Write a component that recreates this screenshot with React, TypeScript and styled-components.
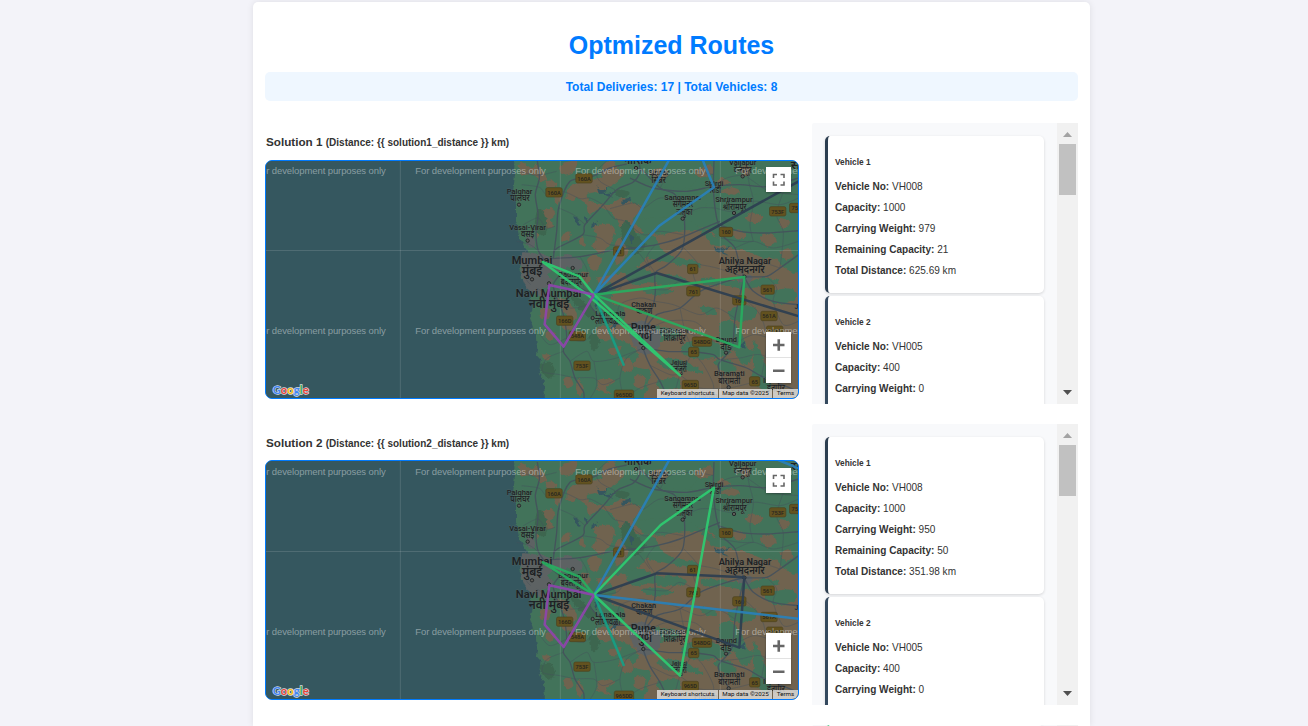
import React from "react";
import styled, { createGlobalStyle } from "styled-components";

const GlobalStyle = createGlobalStyle`
  * { box-sizing: border-box; }
  body {
    margin: 0;
    height: 726px;
    overflow: hidden;
    background: #f3f3f9;
    font-family: "Liberation Sans", Arial, sans-serif;
    font-size: 10px;
    color: #333;
  }
`;

const Page = styled.main`
  width: 837px;
  height: 724px;
  overflow: hidden;
  margin: 2px 0 0 253px;
  padding: 29px 12px 0;
  background: #fff;
  border-radius: 5px 5px 0 0;
  box-shadow: 0 0 7px rgba(0, 0, 0, 0.09);
`;

const Title = styled.h1`
  margin: 0;
  height: 41px;
  line-height: 29px;
  font-size: 25px;
  text-align: center;
  color: #007bff;
`;

const Summary = styled.div`
  height: 29px;
  margin-bottom: 22px;
  border-radius: 5px;
  background: #eff7ff;
  color: #007bff;
  font-size: 12px;
  font-weight: 700;
  line-height: 30px;
  text-align: center;
`;

const Solution = styled.section`
  display: flex;
  gap: 13px;
  height: 281px;
  margin-bottom: 20px;
`;

const MapColumn = styled.div`
  width: 534px;
`;

const Heading = styled.h3`
  margin: 0;
  height: 37px;
  padding: 12px 0 0 1px;
  font-size: 11.7px;
  line-height: 14px;
  white-space: pre;
  small { font-size: 10px; }
`;

const MapFrame = styled.div<{ $tall?: boolean }>`
  position: relative;
  height: ${(p) => (p.$tall ? 240 : 239)}px;
  margin-top: ${(p) => (p.$tall ? -1 : 0)}px;
  border: 1px solid #007bff;
  border-radius: 7px;
  overflow: hidden;
  background: #35575f;
  > svg { display: block; width: 532px; height: 100%; }
`;

const MapButtons = styled.div<{ $top: number }>`
  position: absolute;
  right: 7px;
  top: ${(p) => p.$top}px;
  width: 25px;
  background: #fff;
  box-shadow: 0 1px 2px rgba(0, 0, 0, 0.3);
  svg { display: block; width: 25px; height: 25px; }
  svg + svg { border-top: 1px solid #e2e2e2; height: 26px; }
`;

const Credits = styled.div`
  position: absolute;
  right: 0;
  bottom: 0;
  display: flex;
  gap: 1px;
  font: 400 6.2px/9px Roboto, sans-serif;
  color: #111;
`;

const Credit = styled.span<{ $w: number }>`
  width: ${(p) => p.$w}px;
  height: 9px;
  text-align: center;
  white-space: nowrap;
  background: rgba(235, 235, 232, 0.76);
`;

const Panel = styled.aside`
  display: flex;
  width: 266px;
  height: 281px;
  overflow: hidden;
  background: #f8f9fb;
  border-radius: 2px 0 0 0;
`;

const Cards = styled.div<{ $scrolled?: boolean }>`
  flex: 1;
  padding: ${(p) => (p.$scrolled ? 0 : 13)}px 13px 0;
`;

const Card = styled.article<{ $color: string }>`
  height: 157px;
  margin-bottom: 3px;
  padding: 20px 0 0 7px;
  border-left: 3px solid ${(p) => p.$color};
  border-radius: 5px;
  background: #fff;
  box-shadow: 0 1px 3px rgba(0, 0, 0, 0.15);
`;

const CardTitle = styled.h4`
  margin: 0 0 8px;
  font-size: 8.3px;
  line-height: 12px;
`;

const Field = styled.p`
  margin: 0;
  line-height: 21px;
  font-size: 10.05px;
`;

const Scrollbar = styled.div`
  display: flex;
  flex-direction: column;
  align-items: center;
  width: 21px;
  background: #f1f1f1;
  svg { width: 21px; height: 21px; }
`;

const Thumb = styled.div`
  width: 17px;
  height: 51px;
  margin-bottom: auto;
  background: #c1c1c1;
`;

type Pt = [number, number];
const parse = (s: string): Pt[] => s.split(" ").map((p) => p.split(",").map(Number) as Pt);

/** Smooth curve through a list of points. */
function curve(src: string, closed: boolean) {
  const p = parse(src);
  const n = p.length;
  const at = (i: number) => (closed ? p[(i + n) % n] : p[Math.max(0, Math.min(n - 1, i))]);
  let d = `M${p[0]}`;
  for (let i = 0; i < (closed ? n : n - 1); i++) {
    const [a, b, c, e] = [at(i - 1), at(i), at(i + 1), at(i + 2)];
    d += `C${b[0] + (c[0] - a[0]) / 7},${b[1] + (c[1] - a[1]) / 7} ${c[0] - (e[0] - b[0]) / 7},${c[1] - (e[1] - b[1]) / 7} ${c}`;
  }
  return closed ? d + "Z" : d;
}

const LAND =
  "42,-20 44,60 40,95 48,140 48,185 57,235 72,262 88,282 66,292 60,325 66,362 80,378 92,384 96,400 92,420 100,442 90,480 98,505 108,540 112,575 108,590 122,605 118,640 132,670 136,740 1000,740 1000,-20";

const BROWN = [
  "352,-10 345,20 372,45 345,75 300,100 262,108 270,128 320,140 370,120 398,135 430,150 400,180 405,200 450,205 520,195 600,205 640,225 690,270 740,278 790,300 900,335 920,740 470,740 442,690 450,640 400,625 415,590 390,560 350,540 330,500 372,485 370,450 330,430 345,400 330,375 300,380 290,360 340,350 390,340 430,310 450,270 430,230 375,220 350,190 330,160 300,150 270,170 260,140 230,112 240,70 300,60 310,20",
  "188,15 230,10 222,40 190,50 178,35",
  "205,90 232,75 240,100 222,128 200,120",
  "56,20 70,14 96,30 110,20 128,36 140,62 126,70 100,50 66,48",
  "134,72 160,68 174,82 146,90",
  "120,160 150,150 166,165 150,190 162,205 140,210 118,190",
  "190,225 212,222 205,248 184,250",
  "106,226 122,222 114,240",
  "165,106 182,112 176,140 165,132",
  "284,205 330,198 345,220 330,260 300,290 280,262 290,235",
  "342,270 355,240 375,225 395,240 380,290 350,320",
  "262,300 284,290 305,305 290,335 270,328",
  "240,350 262,342 270,370 252,382",
  "238,240 252,236 254,260 240,262",
  "170,425 200,430 230,465 222,485 192,462",
  "120,450 150,455 145,480 122,478",
  "190,475 220,500 210,520 182,500",
  "140,520 165,530 154,548 138,540",
  "128,590 152,590 146,606 132,604",
  "290,515 315,505 345,530 320,550 298,540",
  "330,570 365,565 350,590 330,590",
  "355,605 385,600 400,630 372,642",
  "290,670 320,660 345,670 318,690 334,708 300,700",
  "410,650 438,658 432,690 405,685",
  "190,660 212,658 220,680 200,690",
  "235,660 248,690 240,715 228,690",
];
const GREEN = [
  "410,-10 500,8 560,-10 700,-10 900,-10 900,60 840,90 800,66 752,80 700,66 650,75 600,60 560,90 480,88 420,75 392,52 430,34",
  "548,100 610,92 620,140 580,165 540,140",
  "650,118 720,120 780,105 896,100 896,330 850,325 815,290 780,276 740,276 690,268 650,228 662,200 640,160",
  "408,192 450,180 530,180 600,205 655,240 690,260 640,262 600,222 540,218 480,230 430,220",
  "432,222 465,240 490,280 540,300 590,310 600,330 540,322 490,310 450,300 415,262",
  "375,340 420,330 480,352 530,350 560,372 505,382 440,372 400,382",
  "610,360 690,366 740,372 790,360 840,370 802,382 730,392 675,382 610,380",
  "425,392 470,386 520,398 480,412 440,405",
  "690,455 730,440 770,455 760,480 722,492 690,480",
  "660,498 690,488 722,520 742,570 762,582 742,620 720,610 700,575 662,550",
  "550,560 610,545 690,570 680,594 600,602 548,590",
  "760,550 785,590 800,640 815,680 796,700 755,668 762,620",
  "470,610 520,600 580,622 610,645 572,640 500,632",
  "390,520 450,505 520,510 545,535 490,548 425,550",
  "800,402 870,392 890,420 840,438 796,420",
  "470,672 530,660 540,690 485,695",
  "600,445 640,450 650,470 615,466",
  "640,610 676,602 710,630 686,645 655,632",
];
const DRY = [
  "665,100 692,88 720,98 700,110", "735,180 760,165 790,180 762,196", "690,222 720,215 740,235 712,244",
  "780,240 812,225 830,250 800,266", "840,180 870,190 858,210 838,202", "585,40 630,22 640,45 602,58",
  "450,40 490,30 505,52 470,66", "720,30 745,22 752,45 730,52", "840,282 870,270 880,295 852,302",
  "500,270 530,262 560,290 528,300", "650,70 670,60 690,75 668,84",
];
const FOREST = [
  "112,155 135,165 142,210 132,232 105,215", "375,190 398,205 412,235 440,260 412,288 380,270 362,235",
  "120,620 150,612 165,640 150,662 128,650", "205,405 240,420 285,460 270,480 230,445",
  "345,95 385,100 372,120 348,112", "280,520 300,550 282,580 268,550",
];
const URBAN = [
  "62,290 88,284 132,290 160,300 205,292 250,315 235,340 205,325 180,345 162,330 145,350 160,375 128,392 135,420 95,400 70,370",
  "80,240 100,236 105,262 86,268", "385,500 432,490 478,525 475,570 440,592 408,570 395,545", "715,350 752,350 750,372 715,370",
];
const WATER = [
  "290,82 302,98 322,90 316,105 344,102 330,110 340,120 315,108 298,106", "370,125 392,120 380,135 368,140",
  "220,175 232,182 242,202 228,194", "275,198 290,192 280,212", "282,435 296,420 290,450", "640,265 662,272 690,265 670,282 690,292 660,284",
  "345,480 352,500 336,512", "415,505 425,515 412,522", "725,560 735,550 733,572", "390,228 402,240 395,254", "255,180 265,178 260,192",
];
const ROADS = [
  "112,9 118,60 106,110 114,170 108,230 116,280 150,325 180,350 215,378 250,395 282,410",
  "160,300 170,220 176,150 210,70 270,58 330,30 380,18",
  "160,285 172,270 248,230 255,200 310,140 350,95 400,72 420,40 415,9",
  "150,302 240,296 340,276 400,270 470,260 540,240 660,190",
  "282,410 270,440 300,475 350,498 400,500 430,520 430,570 450,622 480,670 505,722",
  "430,522 440,480 460,440 466,400 466,345 500,322 548,270 552,170 525,110 480,90 430,40 410,30",
  "430,520 470,470 540,450 600,400 680,370 733,357 800,355 840,330 896,290",
  "733,357 720,330 705,270 670,235 655,200 645,150 640,85 642,9",
  "733,357 720,410 705,480 698,560 680,590 655,620 665,655 690,690",
  "733,357 760,400 820,430 896,440",
  "430,570 500,580 580,582 640,590 660,605 740,630 785,655 896,700",
  "390,60 460,90 560,100 640,85 720,80 800,86 896,60",
  "180,350 160,380 170,420 190,470 200,540 190,580 210,610 225,660 250,700 252,722",
  "655,200 720,220 800,225 896,218",
];
const MINOR = [
  "60,40 110,52 170,40", "65,80 118,88 142,112 188,100 240,122 270,120 310,140", "70,200 114,180 138,210 165,205",
  "345,95 300,70 290,40 320,9", "330,152 400,135 430,150 480,120 552,130", "310,140 340,180 375,190 430,230 480,220 550,230",
  "248,230 300,240 330,260 400,270 450,330", "116,320 80,360 92,380", "240,296 262,340 250,385 282,410",
  "282,410 350,400 380,370 466,345", "350,498 360,440 420,420 466,430 520,440 600,470 650,450 705,480",
  "430,522 500,530 545,515 600,540 698,560", "430,520 500,490 580,490 620,520", "540,450 555,520 575,582 540,650 520,722",
  "430,570 380,600 360,660 372,722", "450,622 510,650 540,652 600,690 690,690", "575,582 610,620 640,680 636,722",
  "698,560 760,530 820,540 896,520", "720,410 780,470 800,550 785,655", "600,400 580,350 595,320 552,270",
  "600,320 650,330 733,357", "705,270 760,250 820,270 896,250", "645,150 700,160 760,130 840,140 896,120",
  "720,330 770,310 840,330", "660,240 720,250 760,250", "640,85 680,60 730,52 760,70 810,100 896,110",
  "552,170 600,150 645,150", "480,90 510,50 580,40 642,50", "200,540 150,560 120,530 100,510",
  "190,580 140,602 128,640 180,650 225,660", "210,610 260,580 282,610 350,600 430,570", "225,660 280,660 310,680 360,660",
  "110,390 145,410 170,420", "170,420 210,450 270,440", "300,475 280,520 250,550 200,540", "800,355 830,390 820,430 850,500 896,490",
  "660,605 720,600 780,590 850,620", "690,690 750,675 785,655", "480,670 420,690 372,722", "50,250 90,260 116,280",
  "430,390 500,395 540,370 600,400", "760,9 745,60 760,130 750,200 760,250", "850,100 830,170 850,225 840,330",
  "466,260 440,300 466,345", "255,200 220,170 176,150", "282,610 290,680 270,722",
];

interface Label { t: string; x: number; y: number; w: number; s?: number; b?: boolean; }
const LABELS: Label[] = [
  { t: "नाशिक", x: 413, y: 17, w: 82, s: 36, b: true },
  { t: "Palghar", x: 59, y: 107, w: 77 }, { t: "पालघर", x: 60, y: 129, w: 58 },
  { t: "Vasai-Virar", x: 83, y: 216, w: 110 }, { t: "वसई", x: 83, y: 238, w: 40 },
  { t: "Mumbai", x: 96, y: 317, w: 122, s: 34, b: true }, { t: "मुंबई", x: 96, y: 350, w: 62, s: 36, b: true },
  { t: "Navi Mumbai", x: 146, y: 418, w: 197, s: 34, b: true }, { t: "नवी मुंबई", x: 147, y: 450, w: 122, s: 36, b: true },
  { t: "Badlapur", x: 220, y: 357, w: 90 }, { t: "बदलापूर", x: 214, y: 380, w: 64 },
  { t: "Sinnar", x: 476, y: 51, w: 62 }, { t: "सिन्नर", x: 476, y: 74, w: 43 },
  { t: "Sangamner", x: 549, y: 126, w: 112 }, { t: "संगमनेर", x: 549, y: 148, w: 62 }, { t: "तालुका", x: 553, y: 171, w: 48 },
  { t: "Shirdi", x: 642, y: 83, w: 56 }, { t: "शिर्डी", x: 646, y: 105, w: 34 },
  { t: "Vaijapur", x: 728, y: 22, w: 82 }, { t: "वैजापूर", x: 728, y: 44, w: 54 },
  { t: "Shrirampur", x: 702, y: 133, w: 112 }, { t: "श्रीरामपूर", x: 704, y: 156, w: 72 },
  { t: "Ahilya Nagar", x: 735, y: 318, w: 158, s: 29, b: true }, { t: "अहमदनगर", x: 734, y: 344, w: 120, s: 31, b: true },
  { t: "Chakan", x: 431, y: 446, w: 74 }, { t: "चाकण", x: 432, y: 468, w: 50 },
  { t: "Lonavala", x: 331, y: 475, w: 90 }, { t: "लोणावळा", x: 323, y: 498, w: 76 },
  { t: "Pune", x: 430, y: 518, w: 75, s: 34, b: true }, { t: "पुणे", x: 434, y: 549, w: 44, s: 38, b: true },
  { t: "Shikrapur", x: 522, y: 526, w: 88 }, { t: "शिक्रापूर", x: 524, y: 549, w: 66 },
  { t: "Daund", x: 679, y: 551, w: 64 }, { t: "दौंड", x: 678, y: 575, w: 34 },
  { t: "Jejuri", x: 536, y: 621, w: 50 }, { t: "जेजुरी", x: 540, y: 643, w: 40 },
  { t: "Baramati", x: 688, y: 654, w: 92 }, { t: "बारामती", x: 688, y: 677, w: 66 },
  { t: "Indapur", x: 828, y: 676, w: 78 }, { t: "इंदापूर", x: 828, y: 698, w: 54 },
  { t: "Phaltan", x: 618, y: 720, w: 70 }, { t: "J", x: 889, y: 453, w: 11 }, { t: "स", x: 886, y: 32, w: 28, s: 32, b: true },
];
const TOWNS: Pt[] = [[57,140],[83,248],[96,364],[218,330],[147,376],[278,480],[408,30],[548,182],[702,165],[728,55],[678,584],[686,688],[733,356],[430,570]];
const SHIELDS: [string, number, number][] = [
  ["160A", 252, 61], ["160A", 162, 103], ["61", 356, 280], ["61", 578, 333], ["160", 678, 222], ["753F", 833, 160],
  ["75", 884, 150], ["761", 580, 400], ["561", 803, 395], ["160", 718, 427], ["561A", 807, 474], ["166D", 194, 488],
  ["548A", 232, 534], ["548DG", 606, 551], ["65", 581, 582], ["753F", 246, 623], ["965D", 571, 681], ["965DD", 372, 710],
  ["65", 764, 670], ["561A", 824, 518],
];

interface Route { c: string; p: string; }
const PURPLE: Route = { c: "#8e44ad", p: "282,410 148,381 134,499 191,566 282,410" };
const TEAL: Route = { c: "#16a085", p: "282,410 372,623" };
const ROUTES: Route[][] = [
  [
    { c: "#2c3e50", p: "896,70 282,410 470,345 900,476" },
    { c: "#2980b9", p: "507,6 282,410 478,203 642,88 608,6" },
    TEAL,
    { c: "#27ae60", p: "282,410 733,357 718,568 282,410" },
    { c: "#2ecc71", p: "282,410 238,355 128,312 262,410 540,652 282,410" },
    PURPLE,
  ],
  [
    { c: "#2c3e50", p: "282,410 470,345 733,357 718,568 282,410" },
    { c: "#2980b9", p: "507,6 282,410 900,482" },
    { c: "#2980b9", p: "830,3 900,32" },
    TEAL,
    { c: "#27ae60", p: "282,410 238,355 128,312 282,410" },
    { c: "#2ecc71", p: "282,410 482,200 642,88 540,652 282,410" },
    PURPLE,
  ],
];

const Shapes = ({ list, fill }: { list: string[]; fill: string }) => (
  <g fill={fill}>{list.map((s) => <path key={s} d={curve(s, true)} />)}</g>
);

function RouteMap({ routes, id, tall }: { routes: Route[]; id: string; tall: boolean }) {
  return (
    <svg viewBox={tall ? "-702 6 1596 714" : "-702 9 1596 711"} preserveAspectRatio="none">
      <filter id={id} x="-5%" y="-5%" width="110%" height="110%">
        <feTurbulence type="fractalNoise" baseFrequency="0.07" numOctaves="3" seed="4" />
        <feDisplacementMap in="SourceGraphic" scale="14" xChannelSelector="R" yChannelSelector="G" />
      </filter>
      <rect x="-702" y="0" width="1600" height="730" fill="#35575f" />
      <g filter={`url(#${id})`}>
        <polygon points={LAND} fill="#43735a" />
        <Shapes list={BROWN} fill="#70634f" />
        <Shapes list={GREEN} fill="#43735a" />
        <Shapes list={DRY} fill="#70634f" />
        <Shapes list={FOREST} fill="#3c6650" />
        <Shapes list={URBAN} fill="#5d6264" />
        <Shapes list={WATER} fill="#35575f" />
      </g>
      <g fill="none" stroke="#45515c" strokeLinejoin="round">
        <g strokeWidth="1.8" opacity=".75">{MINOR.map((r) => <path key={r} d={curve(r, false)} />)}</g>
        <g strokeWidth="4" opacity=".9">{ROADS.map((r) => <path key={r} d={curve(r, false)} />)}</g>
      </g>
      <path d="M-299 0V730M181 0V730M661 0V730M-702 277.500H900" stroke="#fff" strokeOpacity=".13" strokeWidth="3" />
      <g fontFamily="Roboto, sans-serif" fontWeight="500" fontSize="17" textAnchor="middle">
        {SHIELDS.map(([t, x, y], i) => {
          const w = t.length * 9 + 13;
          return (
            <g key={i}>
              <rect x={x - w / 2} y={y - 14} width={w} height="28" rx="5" fill="#63521f" stroke="#4c431f" strokeWidth="2" />
              <text x={x} y={y + 7} fill="#25251f">{t}</text>
            </g>
          );
        })}
      </g>
      <g fill="#5e5d58" stroke="#25292b" strokeWidth="3">
        {TOWNS.map(([x, y]) => <circle key={x} cx={x} cy={y} r="5" />)}
      </g>
      <g fill="#1d2124" fontFamily='Roboto, "Noto Sans Devanagari", "Noto Sans", sans-serif' textAnchor="middle" stroke="#6c7067" strokeOpacity=".35" strokeWidth="3" paintOrder="stroke">
        {LABELS.map((l, i) => (
          <text key={i} x={l.x} y={l.y} fontSize={l.s ?? (l.t.charCodeAt(0) > 255 ? 26 : 23)} fontWeight={l.b ? 600 : 500} textLength={l.w} lengthAdjust="spacingAndGlyphs">{l.t}</text>
        ))}
      </g>
      <g fill="#fff" fillOpacity=".42" fontFamily='"Liberation Sans", Arial, sans-serif' fontSize="28.500">
        {[49, 529].map((y) => [-734, -254, 226, 706].map((x) => (
          <text key={`${x} ${y}`} x={x} y={y} textLength="391">For development purposes only</text>
        )))}
      </g>
      <g fill="none" strokeWidth="7.500" strokeLinejoin="round" strokeOpacity=".92" transform={tall ? "translate(0 -2)" : undefined}>
        {routes.map((r, i) => <polyline key={i} points={r.p} stroke={r.c} />)}
      </g>
      <text x="-682" y="708" fontFamily="Lato, sans-serif" fontWeight="700" fontSize="34" textLength="108" lengthAdjust="spacingAndGlyphs" stroke="#d3dbe2" strokeWidth="4" paintOrder="stroke">
        <tspan fill="#4285f4">G</tspan><tspan fill="#ea4335">o</tspan><tspan fill="#fbbc05">o</tspan><tspan fill="#4285f4">g</tspan><tspan fill="#34a853">l</tspan><tspan fill="#ea4335">e</tspan>
      </text>
    </svg>
  );
}

function MapView({ index }: { index: number }) {
  return (
    <MapFrame $tall={index === 1}>
      <RouteMap routes={ROUTES[index]} id={`rough${index}`} tall={index === 1} />
      <MapButtons $top={6 + index}>
        <svg viewBox="0 0 25 25" fill="none" stroke="#666" strokeWidth="1.600">
          <path d="M7.500 11V7.500H11M14.500 7.500H18V11M18 14.500V18H14.500M11 18H7.500V14.500" />
        </svg>
      </MapButtons>
      <MapButtons $top={171 + index}>
        <svg viewBox="0 0 25 25" stroke="#666" strokeWidth="2.600"><path d="M7 13H18.500M12.750 7.250V18.750" /></svg>
        <svg viewBox="0 0 25 25" stroke="#666" strokeWidth="2.600"><path d="M7 12.700H18.500" /></svg>
      </MapButtons>
      <Credits>
        <Credit $w={61}>Keyboard shortcuts</Credit>
        <Credit $w={53}>Map data ©2025</Credit>
        <Credit $w={25}>Terms</Credit>
      </Credits>
    </MapFrame>
  );
}

interface Vehicle { color: string; fields: [string, string][]; }
const vehicles = (weight: string, remaining: string, distance: string): Vehicle[] => [
  {
    color: "#2c3e50",
    fields: [["Vehicle No", "VH008"], ["Capacity", "1000"], ["Carrying Weight", weight], ["Remaining Capacity", remaining], ["Total Distance", distance]],
  },
  { color: "#34495e", fields: [["Vehicle No", "VH005"], ["Capacity", "400"], ["Carrying Weight", "0"]] },
];

function VehiclePanel({ list }: { list: Vehicle[] }) {
  return (
    <Panel>
      <Cards>
        {list.map((v, i) => (
          <Card key={i} $color={v.color}>
            <CardTitle>Vehicle {i + 1}</CardTitle>
            {v.fields.map(([name, value]) => (
              <Field key={name}><b>{name}:</b> {value}</Field>
            ))}
          </Card>
        ))}
      </Cards>
      <Scrollbar>
        <svg viewBox="0 0 21 21"><path d="M6 14L10.500 9L15 14Z" fill="#a3a3a3" /></svg>
        <Thumb />
        <svg viewBox="0 0 21 21"><path d="M6 7L10.500 12L15 7Z" fill="#505050" /></svg>
      </Scrollbar>
    </Panel>
  );
}

export default function App() {
  const panels = [vehicles("979", "21", "625.69 km"), vehicles("950", "50", "351.98 km")];
  return (
    <>
      <GlobalStyle />
      <Page>
        <Title>Optmized Routes</Title>
        <Summary>Total Deliveries: 17 | Total Vehicles: 8</Summary>
        {panels.map((list, i) => (
          <Solution key={i}>
            <MapColumn>
              <Heading>Solution {i + 1} <small>{`(Distance: {{ solution${i + 1}_distance }} km)`}</small></Heading>
              <MapView index={i} />
            </MapColumn>
            <VehiclePanel list={list} />
          </Solution>
        ))}
        <Solution>
          <MapColumn />
          <Panel>
            <Cards $scrolled><Card $color="#2ecc71" /></Cards>
            <Scrollbar />
          </Panel>
        </Solution>
      </Page>
    </>
  );
}
